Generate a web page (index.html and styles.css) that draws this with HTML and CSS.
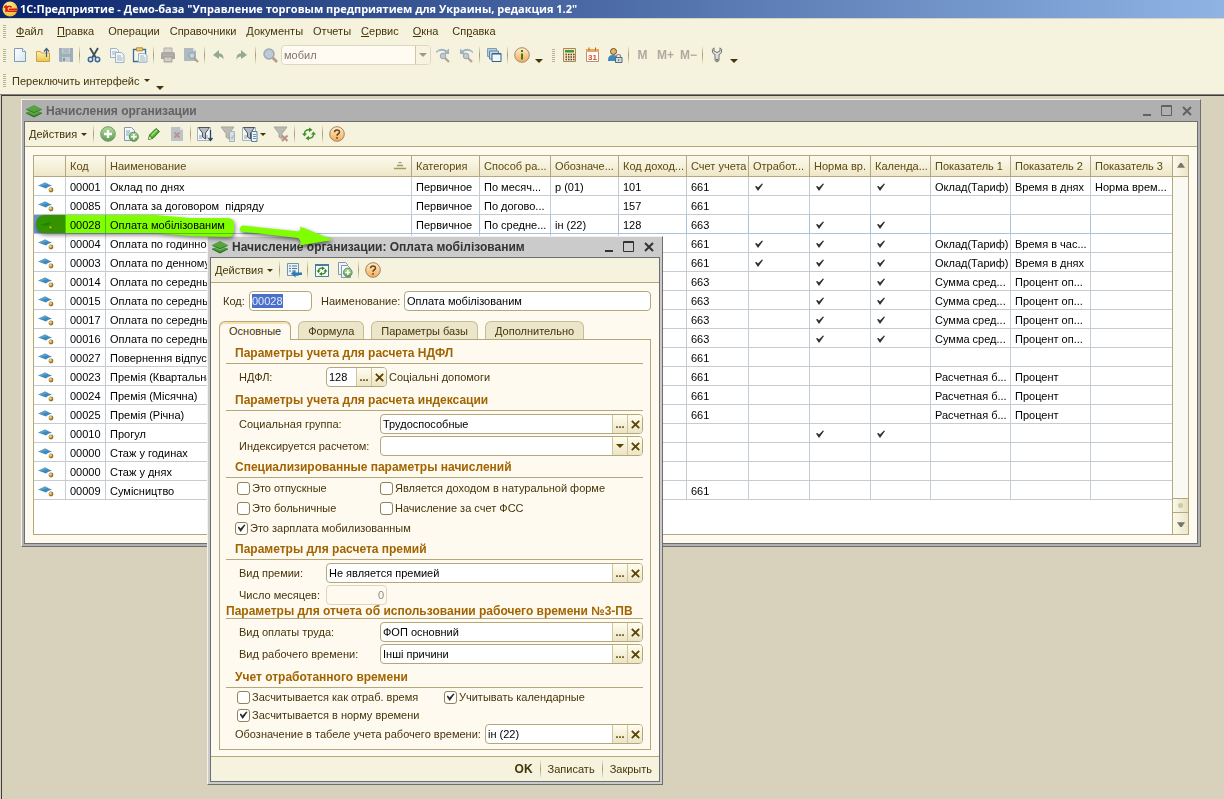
FILE: index.html
```html
<!DOCTYPE html>
<html lang="ru">

<head>
    <meta charset="UTF-8" />
    <meta name="viewport" content="width=device-width, initial-scale=1.0" />
    <title>1С:Предприятие - Демо-база</title>
    <link rel="stylesheet" href="styles.css">
</head>

<body>
    <!-- Icons -->
    <svg class="sprite" aria-hidden="true">
        <defs>
            <linearGradient id="g-orange" x1="0" y1="0" x2="0" y2="1">
                <stop offset="0" stop-color="#fff0cc" />
                <stop offset="1" stop-color="#f3ab58" />
            </linearGradient>
            <linearGradient id="g-green" x1="0" y1="0" x2="0" y2="1">
                <stop offset="0" stop-color="#b4dba0" />
                <stop offset="1" stop-color="#5b9d4c" />
            </linearGradient>
            <linearGradient id="g-folder" x1="0" y1="0" x2="0" y2="1">
                <stop offset="0" stop-color="#fdf3b0" />
                <stop offset="1" stop-color="#ecc24c" />
            </linearGradient>
            <linearGradient id="g-page" x1="0" y1="0" x2="1" y2="1">
                <stop offset="0" stop-color="#ffffff" />
                <stop offset="1" stop-color="#d5e6f3" />
            </linearGradient>
            <radialGradient id="g-ball" cx="0.4" cy="0.3" r="0.7">
                <stop offset="0" stop-color="#fff3a0" />
                <stop offset="1" stop-color="#f0b832" />
            </radialGradient>
        </defs>
        <symbol id="i-logo" viewBox="0 0 16 16">
            <circle cx="8" cy="8" r="7.500" fill="url(#g-ball)" />
            <path d="M2 6.500l2-1.500v6M9.500 6.500A2.500 2.500 0 1 0 8 10.200h7M9 8.200H6.800M9 8.300h6" fill="none" stroke="#d8160c" stroke-width="1.500" />
        </symbol>
        <symbol id="i-new" viewBox="0 0 16 16">
            <path d="M2.500 1.500h8l3 3v10h-11z" fill="url(#g-page)" stroke="#7e9cb8" />
            <path d="M10.500 1.500v3h3" fill="#fff" stroke="#7e9cb8" />
        </symbol>
        <symbol id="i-open" viewBox="0 0 16 16">
            <path d="M1.500 4.500h4l1 1.500h8v8.500h-13z" fill="url(#g-folder)" stroke="#d0a040" />
            <path d="M11.500 10V2M9 4.500L11.500 1.500 14 4.500" fill="none" stroke="#42607c" stroke-width="1.200" />
        </symbol>
        <symbol id="i-save" viewBox="0 0 16 16">
            <path d="M1 1h14v14H2l-1-1z" fill="#9fafb9" />
            <path d="M4 1.500h8v5H4z" fill="#c8d2d6" />
            <path d="M5 3h6M5 5h6" stroke="#93a4ae" />
            <path d="M4 10h8v5H4z" fill="#c3ccd0" />
            <path d="M5 11h2v3H5z" fill="#8497a4" />
        </symbol>
        <symbol id="i-cut" viewBox="0 0 16 16">
            <path d="M4 1l6 10M12 1L6 11" stroke="#3d4d5a" stroke-width="1.800" fill="none" />
            <circle cx="4.500" cy="12.500" r="2.200" fill="none" stroke="#37699c" stroke-width="1.500" />
            <circle cx="11.500" cy="12.500" r="2.200" fill="none" stroke="#37699c" stroke-width="1.500" />
        </symbol>
        <symbol id="i-copy" viewBox="0 0 16 16">
            <path d="M1.500 1.500h6l2 2v7h-8z" fill="#f2f6f8" stroke="#9db2c4" />
            <path d="M3 5h5M3 7h3" stroke="#9db2c4" />
            <path d="M6.500 5.500h6l2.500 2.500v7.500H6.500z" fill="#f2f6f8" stroke="#9db2c4" />
            <path d="M8 9h4M8 11h5.500M8 13h5.500" stroke="#9db2c4" />
        </symbol>
        <symbol id="i-paste" viewBox="0 0 16 16">
            <path d="M1.500 2.500h12v12h-12z" fill="#f8f6ea" stroke="#3d6d9a" stroke-width="1.300" />
            <path d="M4.500 .8h6v3h-6z" fill="#f0cf6c" stroke="#b58b30" />
            <path d="M6.500 6.500h6l2.500 2v6.500H6.500z" fill="#f4f8fb" stroke="#9db2c4" />
            <path d="M8 9h4M8 11h5.500M8 13h5.500" stroke="#9db2c4" />
        </symbol>
        <symbol id="i-print" viewBox="0 0 16 16">
            <path d="M4 1h8v5H4z" fill="#d8d3cc" stroke="#b3aea9" />
            <path d="M1 6.500Q1 5 3 5h10q2 0 2 1.500V12H1z" fill="#a9a7a6" />
            <path d="M3 8h10" stroke="#c9aaa4" stroke-width="1.500" />
            <path d="M4 10h8v5H4z" fill="#d0ccc6" stroke="#a5a2a0" />
        </symbol>
        <symbol id="i-preview" viewBox="0 0 16 16">
            <path d="M1 1h9l3 3v10H1z" fill="#aebac2" />
            <path d="M10 1v3h3" fill="#dbe1e4" />
            <circle cx="9" cy="8.500" r="3" fill="#c6d2da" stroke="#8f9ba5" />
            <path d="M11 11l4 4" stroke="#b09a90" stroke-width="2.200" />
        </symbol>
        <symbol id="i-undo" viewBox="0 0 16 16">
            <path d="M2 8l6-5v3.300q5 0 4.500 6.700-1-3.500-4.500-3.500V12z" fill="#93ab8e" />
        </symbol>
        <symbol id="i-redo" viewBox="0 0 16 16">
            <path d="M13 8L7 3v3.300Q2 6.300 2.500 13 3.500 9.500 7 9.500V12z" fill="#93ab8e" />
        </symbol>
        <symbol id="i-find" viewBox="0 0 16 16">
            <circle cx="7" cy="7" r="5" fill="#b9cada" stroke="#a3a9ae" stroke-width="1.500" />
            <path d="M10.500 10.500L15 15" stroke="#bd9c8c" stroke-width="2.800" />
        </symbol>
        <symbol id="i-findnext" viewBox="0 0 16 16">
            <path d="M1 6V4.500Q6-.5 12 3.500L14 1.500V7H8.500l2-2Q6 2 1 6z" fill="#9eb3c0" />
            <circle cx="8" cy="9" r="2.800" fill="#bccbd6" stroke="#9ba6ae" />
            <path d="M10 11l4 4" stroke="#b9a096" stroke-width="2.300" />
        </symbol>
        <symbol id="i-findprev" viewBox="0 0 16 16">
            <path d="M15 6V4.500Q10-.5 4 3.500L2 1.500V7h5.500l-2-2Q10 2 15 6z" fill="#9eb3c0" />
            <circle cx="8" cy="9" r="2.800" fill="#bccbd6" stroke="#9ba6ae" />
            <path d="M10 11l4 4" stroke="#b9a096" stroke-width="2.300" />
        </symbol>
        <symbol id="i-windows" viewBox="0 0 16 16">
            <path d="M1.500 1.500h9v8h-9z" fill="#b9cddd" stroke="#7f9db8" />
            <path d="M3.500 4h9v8h-9z" fill="#c9dae6" stroke="#5c83a8" />
            <path d="M6 6.500h9v8H6z" fill="#f2f7fa" stroke="#2e6190" />
            <path d="M6 7h9" stroke="#2e6190" />
        </symbol>
        <symbol id="i-info" viewBox="0 0 16 16">
            <circle cx="8" cy="8" r="7.300" fill="url(#g-orange)" stroke="#a58b68" />
            <path d="M8 6.500V12.500M8 3v2" fill="none" stroke="#3f7a26" stroke-width="2" />
        </symbol>
        <symbol id="i-calc" viewBox="0 0 16 16">
            <path d="M2.500 1.500h12v13h-12z" fill="#fbe6bf" stroke="#a8875d" />
            <path d="M4 3h9v2.500H4z" fill="#3c9b36" />
            <path d="M4.500 7.500h9M4.500 10h9M4.500 12.500h9" stroke="#54402c" stroke-width="1.500" stroke-dasharray="1.500 1" />
        </symbol>
        <symbol id="i-user" viewBox="0 0 16 16">
            <path d="M1 13q0-5 5-5t5 5v1H1z" fill="#3f88bd" />
            <circle cx="6.500" cy="4.500" r="3" fill="#e8b468" stroke="#6e4a20" />
            <path d="M9.500 11V9q0-1.500 2-1.500T13.500 9v2" fill="none" stroke="#7c8a94" stroke-width="1.200" />
            <path d="M8.500 10.500h6.500v5H8.500z" fill="#d5dbe0" stroke="#54697a" />
            <path d="M11.700 12v2" stroke="#54697a" />
        </symbol>
        <symbol id="i-wrench" viewBox="0 0 16 16">
            <path d="M5 .8Q2.500 2 3.500 5 4 7 6 7.500V13.500Q8 16.500 10 13.500V7.500Q12 7 12.500 5 13.500 2 11 .8V4L8 5.500 5 4z" fill="#dededc" stroke="#73726e" />
            <circle cx="8" cy="12.800" r="1" fill="#5e5d59" />
        </symbol>
        <symbol id="i-book" viewBox="0 0 16 16">
            <path d="M0 9.500l3-1L8 11l5-2.500 3 1L8 14z" fill="#4d9c38" />
            <path d="M0 9.500L8 13l8-3.500v1L8 14.500 0 10.500z" fill="#2f7023" />
            <path d="M0 6l8-4 8 4-8 4z" fill="#55a53e" />
            <path d="M0 6l8 3 8-3v.8L8 10.500 0 6.800z" fill="#367c27" />
        </symbol>
        <symbol id="i-add" viewBox="0 0 16 16">
            <circle cx="8" cy="8" r="7.300" fill="url(#g-green)" stroke="#75976b" />
            <path d="M8 4v8M4 8h8" stroke="#fff" stroke-width="2.400" />
        </symbol>
        <symbol id="i-addcopy" viewBox="0 0 16 16">
            <path d="M1.500 1.500h7l3 3v10h-10z" fill="url(#g-page)" stroke="#8099ae" />
            <path d="M3 5h4M3 7h5M3 9h3" stroke="#86a3bb" />
            <circle cx="10.800" cy="10.800" r="4.500" fill="url(#g-green)" stroke="#5e8b52" />
            <path d="M10.800 8v5.600M8 10.800h5.600" stroke="#fff" stroke-width="1.500" />
        </symbol>
        <symbol id="i-copyadd" viewBox="0 0 16 16">
            <path d="M1.500 .5h7l2 2v10h-9z" fill="#eef4f8" stroke="#8099ae" />
            <path d="M4.500 3.500h6l3 3v9h-9z" fill="url(#g-page)" stroke="#8099ae" />
            <circle cx="10.800" cy="10.500" r="4.300" fill="url(#g-green)" stroke="#5e8b52" />
            <path d="M10.800 8v5M8.300 10.500h5" stroke="#fff" stroke-width="1.500" />
        </symbol>
        <symbol id="i-edit" viewBox="0 0 16 16">
            <path d="M2.500 13.500l1-4.500L10 2.500 13.500 5.500 7 12.300z" fill="#55b02f" stroke="#2f7a1c" />
            <path d="M5.500 9.500l5.500-5.500" stroke="#aadf85" stroke-width="1.500" />
            <path d="M2.500 13.500l1-3 2 2z" fill="#f0e0a8" />
        </symbol>
        <symbol id="i-delete" viewBox="0 0 16 16">
            <path d="M2 1h9l3 3v11H2z" fill="#b9c3c9" />
            <path d="M11 1v3h3" fill="#dfe4e6" />
            <path d="M5.500 6.500l5 5M10.500 6.500l-5 5" stroke="#c09088" stroke-width="1.800" />
        </symbol>
        <symbol id="i-filter" viewBox="0 0 16 16">
            <path d="M.5 1.500h13v13H.5z" fill="#f4f6f8" stroke="#a5b1bb" />
            <path d="M2 10h3M9 10h2M2 12h3M9 12h2" stroke="#8fa0ae" />
            <path d="M1.500 1.500h11L8.500 7v6l-3-2V7z" fill="#b4bbc1" stroke="#4c5660" />
            <path d="M13.500 4v10M11.500 12l2 2.500 2-2.500" stroke="#28465f" stroke-width="1.300" fill="none" />
        </symbol>
        <symbol id="i-filtercell" viewBox="0 0 16 16">
            <path d="M1 1h13L9 7.500V13L6 11V7.500z" fill="#bbbab3" stroke="#a6a69f" />
            <path d="M9.500 5.500h5v10h-5z" fill="#d8dfe0" stroke="#a5b4bf" />
            <path d="M10.500 11l1.500 1.500L14 9" stroke="#9ba9b2" fill="none" />
        </symbol>
        <symbol id="i-filterlist" viewBox="0 0 16 16">
            <path d="M.5 1.500h13v13H.5z" fill="#f4f6f8" stroke="#a5b1bb" />
            <path d="M2 10h3M2 12h3" stroke="#8fa0ae" />
            <path d="M1.500 1.500h11L8.500 7v6l-3-2V7z" fill="#b4bbc1" stroke="#4c5660" />
            <path d="M9.500 5.500h5.500v10H9.500z" fill="#eef4f8" stroke="#58809f" />
            <path d="M11 8.500h3M11 10.500h3M11 12.500h3" stroke="#6e94b2" />
        </symbol>
        <symbol id="i-filteroff" viewBox="0 0 16 16">
            <path d="M1 1h13L9 7.500V13L6 11V7.500z" fill="#bbbab3" stroke="#a6a69f" />
            <path d="M9 9.500l5.500 5.500M14.500 9.500L9 15" stroke="#bb9186" stroke-width="2" />
        </symbol>
        <symbol id="i-refresh" viewBox="0 0 16 16">
            <path d="M3.500 8q0-4.500 5-4.200M12.500 8q0 4.500-5 4.200" fill="none" stroke="#3e8f2d" stroke-width="1.500" />
            <path d="M8 1.500l3.500 2.300L8 6.200zM8 9.800v4.700l-3.500-2.300z" fill="#3e8f2d" />
            <path d="M1 7.500h5l-2.500 3zM10 8.500h5l-2.500-3z" fill="#3e8f2d" />
        </symbol>
        <symbol id="i-reread" viewBox="0 0 16 16">
            <path d="M1.500 2.500h13v12h-13z" fill="#f6faf6" stroke="#4c7ba0" />
            <path d="M1 3h14" stroke="#4c7ba0" stroke-width="2" />
            <path d="M4.500 9q0-3 3.500-2.800M11.500 9q0 3-3.500 2.800" fill="none" stroke="#2f8324" stroke-width="1.300" />
            <path d="M8 4.500l3 1.800-3 1.900zM8 10v3.800l-3-1.900zM2.500 8.500h4l-2 2.500zM9.500 9.500h4l-2-2.500z" fill="#2f8324" />
        </symbol>
        <symbol id="i-savegoto" viewBox="0 0 16 16">
            <path d="M1.500 1.500h11v12h-11z" fill="#eaf2f8" stroke="#7392ab" />
            <path d="M3 4h2M6 4h5M3 6.500h2M6 6.500h5M3 9h2M6 9h3" stroke="#4b7ba5" stroke-width="1.200" />
            <path d="M5 11.500L9.500 8v2.500H16v2.500H9.500v2.500z" fill="#2f79b4" />
        </symbol>
        <symbol id="i-help" viewBox="0 0 16 16">
            <circle cx="8" cy="8" r="7.300" fill="url(#g-orange)" stroke="#a5805c" />
            <path d="M5.500 6.300Q5.600 4 8 4t2.500 2q0 1.200-1.400 2Q8 8.600 8 9.800M8 11v1.700" fill="none" stroke="#6a4420" stroke-width="1.500" />
        </symbol>
        <symbol id="i-row" viewBox="0 0 16 12">
            <path d="M0 4.500L3 3.500 7 1.500 11 3.500 14 4.500 10 6 8 7.500 4 6z" fill="#3f88bb" />
            <path d="M0 4.500L3 3.500 7 1.500 10 3 4 5z" fill="#5b9fcc" />
            <circle cx="13" cy="9" r="2.400" fill="#9c7628" />
            <circle cx="12.500" cy="8.400" r="1.300" fill="#ecd07c" />
        </symbol>
        <symbol id="i-tick" viewBox="0 0 8 8">
            <path d="M0 3.500L1.500 3 3 4.500 7 .5 8 1 3 8z" fill="#2e2e2e" />
        </symbol>
        <symbol id="i-min" viewBox="0 0 12 12">
            <path d="M2 10h8" stroke="currentColor" stroke-width="2" />
        </symbol>
        <symbol id="i-max" viewBox="0 0 12 12">
            <path d="M.5 .5h10v10H.5zM0 1.500h11" fill="none" stroke="currentColor" />
        </symbol>
        <symbol id="i-close" viewBox="0 0 12 12">
            <path d="M2 2l8 8M10 2l-8 8" stroke="currentColor" stroke-width="2" />
        </symbol>
        <symbol id="i-down" viewBox="0 0 8 4">
            <path d="M0 0h8L4 4z" fill="currentColor" />
        </symbol>
        <symbol id="i-sort" viewBox="0 0 12 8">
            <path d="M4.500 .5h3M3 3.500h6M0 6.500h12" stroke="#a39a62" stroke-width="1.500" />
        </symbol>
    </svg>

    <header>
        <h1 class="app-title"><svg class="icon"><use href="#i-logo" /></svg>1С:Предприятие - Демо-база "Управление торговым предприятием для Украины, редакция 1.2"</h1>
        <nav class="menu">
            <span class="grip"></span>
            <a href="#"><u>Ф</u>айл</a>
            <a href="#"><u>П</u>равка</a>
            <a href="#">Операции</a>
            <a href="#">Справочники</a>
            <a href="#">Документы</a>
            <a href="#">Отчеты</a>
            <a href="#"><u>С</u>ервис</a>
            <a href="#"><u>О</u>кна</a>
            <a href="#">Сп<u>р</u>авка</a>
        </nav>
        <div class="toolbar main-tools">
            <span class="grip"></span>
            <button class="tool" aria-label="Новый"><svg class="icon"><use href="#i-new" /></svg></button>
            <button class="tool" aria-label="Открыть"><svg class="icon"><use href="#i-open" /></svg></button>
            <button class="tool" aria-label="Сохранить"><svg class="icon"><use href="#i-save" /></svg></button>
            <span class="sep"></span>
            <button class="tool" aria-label="Вырезать"><svg class="icon"><use href="#i-cut" /></svg></button>
            <button class="tool" aria-label="Копировать"><svg class="icon"><use href="#i-copy" /></svg></button>
            <button class="tool" aria-label="Вставить"><svg class="icon"><use href="#i-paste" /></svg></button>
            <span class="sep"></span>
            <button class="tool" aria-label="Печать"><svg class="icon"><use href="#i-print" /></svg></button>
            <button class="tool" aria-label="Просмотр"><svg class="icon"><use href="#i-preview" /></svg></button>
            <span class="sep"></span>
            <button class="tool" aria-label="Отменить"><svg class="icon"><use href="#i-undo" /></svg></button>
            <button class="tool" aria-label="Вернуть"><svg class="icon"><use href="#i-redo" /></svg></button>
            <span class="sep"></span>
            <button class="tool" aria-label="Найти"><svg class="icon"><use href="#i-find" /></svg></button>
            <div class="field search">
                <select aria-label="Поиск">
                    <option>мобил</option>
                </select>
                <span class="drop"><svg class="caret"><use href="#i-down" /></svg></span>
            </div>
            <button class="tool" aria-label="Найти далее"><svg class="icon"><use href="#i-findnext" /></svg></button>
            <button class="tool" aria-label="Найти назад"><svg class="icon"><use href="#i-findprev" /></svg></button>
            <span class="sep"></span>
            <button class="tool" aria-label="Окна"><svg class="icon"><use href="#i-windows" /></svg></button>
            <span class="sep"></span>
            <button class="tool" aria-label="Справка"><svg class="icon"><use href="#i-info" /></svg></button>
            <button class="more" aria-label="Еще"><svg class="caret"><use href="#i-down" /></svg></button>
            <span class="grip"></span>
            <button class="tool" aria-label="Калькулятор"><svg class="icon"><use href="#i-calc" /></svg></button>
            <button class="tool" aria-label="Календарь">
                <svg class="icon" viewBox="0 0 16 16">
                    <path d="M2.500 2.500h12v12h-12z" fill="#fff" stroke="#b49475" />
                    <path d="M2 2h13v3H2z" fill="#f0a455" />
                    <path d="M5 .5v3M11.500 .5v3" stroke="#8f6c4c" />
                    <text x="4" y="13" class="day">31</text>
                </svg>
            </button>
            <button class="tool" aria-label="Пользователи"><svg class="icon"><use href="#i-user" /></svg></button>
            <span class="sep"></span>
            <button class="tool memory">M</button>
            <button class="tool memory">M+</button>
            <button class="tool memory">M−</button>
            <span class="sep"></span>
            <button class="tool" aria-label="Настройка"><svg class="icon"><use href="#i-wrench" /></svg></button>
            <button class="more" aria-label="Еще"><svg class="caret"><use href="#i-down" /></svg></button>
        </div>
        <div class="toolbar switch">
            <span class="grip"></span>
            <button class="text-tool">Переключить интерфейс<svg class="caret small"><use href="#i-down" /></svg></button>
            <button class="more" aria-label="Еще"><svg class="caret"><use href="#i-down" /></svg></button>
        </div>
    </header>

    <main class="desktop">
        <section class="window list-window">
            <div class="title-bar">
                <svg class="icon"><use href="#i-book" /></svg>
                <h2>Начисления организации</h2>
                <button aria-label="Свернуть"><svg><use href="#i-min" /></svg></button>
                <button aria-label="Развернуть"><svg><use href="#i-max" /></svg></button>
                <button aria-label="Закрыть"><svg><use href="#i-close" /></svg></button>
            </div>
            <div class="window-body">
                <div class="toolbar">
                    <button class="text-tool">Действия<svg class="caret small"><use href="#i-down" /></svg></button>
                    <span class="sep"></span>
                    <button class="tool" aria-label="Добавить"><svg class="icon"><use href="#i-add" /></svg></button>
                    <button class="tool" aria-label="Скопировать"><svg class="icon"><use href="#i-addcopy" /></svg></button>
                    <button class="tool" aria-label="Изменить"><svg class="icon"><use href="#i-edit" /></svg></button>
                    <button class="tool" aria-label="Удалить"><svg class="icon"><use href="#i-delete" /></svg></button>
                    <span class="sep"></span>
                    <button class="tool" aria-label="Отбор"><svg class="icon"><use href="#i-filter" /></svg></button>
                    <button class="tool" aria-label="Отбор по значению"><svg class="icon"><use href="#i-filtercell" /></svg></button>
                    <button class="tool wide" aria-label="История отборов"><svg class="icon"><use href="#i-filterlist" /></svg><svg class="caret small"><use href="#i-down" /></svg></button>
                    <button class="tool" aria-label="Отключить отбор"><svg class="icon"><use href="#i-filteroff" /></svg></button>
                    <span class="sep"></span>
                    <button class="tool" aria-label="Обновить"><svg class="icon"><use href="#i-refresh" /></svg></button>
                    <span class="sep"></span>
                    <button class="tool" aria-label="Справка"><svg class="icon"><use href="#i-help" /></svg></button>
                </div>
                <div class="list">
                    <table>
                        <colgroup>
                            <col class="w32"><col class="w40"><col><col class="w68"><col class="w71"><col class="w68"><col class="w68">
                            <col class="w62"><col class="w61"><col class="w61"><col class="w60"><col class="w80"><col class="w80"><col class="w81">
                        </colgroup>
                        <thead>
                            <tr>
                                <th></th>
                                <th>Код</th>
                                <th><span class="sorted">Наименование<svg><use href="#i-sort" /></svg></span></th>
                                <th>Категория</th>
                                <th>Способ ра...</th>
                                <th>Обозначе...</th>
                                <th>Код доход...</th>
                                <th>Счет учета</th>
                                <th>Отработ...</th>
                                <th>Норма вр.</th>
                                <th>Календа...</th>
                                <th>Показатель 1</th>
                                <th>Показатель 2</th>
                                <th>Показатель 3</th>
                            </tr>
                        </thead>
                        <tbody id="rows"></tbody>
                    </table>
                    <div class="scrollbar">
                        <button class="up" aria-label="Вверх"><svg class="caret"><use href="#i-down" /></svg></button>
                        <span class="thumb"></span>
                        <button class="down" aria-label="Вниз"><svg class="caret"><use href="#i-down" /></svg></button>
                    </div>
                </div>
            </div>
        </section>

        <section class="window dialog">
            <div class="title-bar">
                <svg class="icon"><use href="#i-book" /></svg>
                <h2>Начисление организации: Оплата мобілізованим</h2>
                <button aria-label="Свернуть"><svg><use href="#i-min" /></svg></button>
                <button aria-label="Развернуть"><svg><use href="#i-max" /></svg></button>
                <button aria-label="Закрыть"><svg><use href="#i-close" /></svg></button>
            </div>
            <div class="window-body">
                <div class="toolbar">
                    <button class="text-tool">Действия<svg class="caret small"><use href="#i-down" /></svg></button>
                    <span class="sep"></span>
                    <button class="tool" aria-label="Перейти к списку"><svg class="icon"><use href="#i-savegoto" /></svg></button>
                    <span class="sep"></span>
                    <button class="tool" aria-label="Перечитать"><svg class="icon"><use href="#i-reread" /></svg></button>
                    <button class="tool" aria-label="Скопировать"><svg class="icon"><use href="#i-copyadd" /></svg></button>
                    <span class="sep"></span>
                    <button class="tool" aria-label="Справка"><svg class="icon"><use href="#i-help" /></svg></button>
                </div>
                <form class="card">
                    <div class="top-fields">
                        <label for="code">Код:</label>
                        <div class="field code"><input id="code" type="text" value="00028"></div>
                        <label for="name" class="name-label">Наименование:</label>
                        <div class="field grow"><input id="name" type="text" value="Оплата мобілізованим"></div>
                    </div>
                    <div class="tabs" role="tablist">
                        <button type="button" role="tab" class="active" aria-selected="true">Основные</button>
                        <button type="button" role="tab">Формула</button>
                        <button type="button" role="tab">Параметры базы</button>
                        <button type="button" role="tab">Дополнительно</button>
                    </div>
                    <div class="panel">
                        <h3>Параметры учета для расчета НДФЛ</h3>
                        <div class="rows">
                            <div class="row narrow">
                                <label for="ndfl">НДФЛ:</label>
                                <div class="field short">
                                    <input id="ndfl" type="text" value="128">
                                    <button type="button">...</button>
                                    <button type="button" aria-label="Очистить"><svg><use href="#i-close" /></svg></button>
                                </div>
                                <span class="hint">Соціальні допомоги</span>
                            </div>
                        </div>
                        <h3>Параметры учета для расчета индексации</h3>
                        <div class="rows">
                            <div class="row">
                                <label for="group">Социальная группа:</label>
                                <div class="field grow">
                                    <input id="group" type="text" value="Трудоспособные">
                                    <button type="button">...</button>
                                    <button type="button" aria-label="Очистить"><svg><use href="#i-close" /></svg></button>
                                </div>
                            </div>
                            <div class="row">
                                <label for="indexed">Индексируется расчетом:</label>
                                <div class="field grow">
                                    <select id="indexed">
                                        <option></option>
                                    </select>
                                    <span class="drop"><svg class="caret"><use href="#i-down" /></svg></span>
                                    <button type="button" aria-label="Очистить"><svg><use href="#i-close" /></svg></button>
                                </div>
                            </div>
                        </div>
                        <h3 class="compact">Специализированные параметры начислений</h3>
                        <div class="checks">
                            <label><input type="checkbox">Это отпускные</label>
                            <label><input type="checkbox">Является доходом в натуральной форме</label>
                            <label><input type="checkbox">Это больничные</label>
                            <label><input type="checkbox">Начисление за счет ФСС</label>
                            <label class="outdent"><input type="checkbox" checked>Это зарплата мобилизованным</label>
                        </div>
                        <h3 class="compact">Параметры для расчета премий</h3>
                        <div class="rows">
                            <div class="row narrow">
                                <label for="bonus">Вид премии:</label>
                                <div class="field grow">
                                    <input id="bonus" type="text" value="Не является премией">
                                    <button type="button">...</button>
                                    <button type="button" aria-label="Очистить"><svg><use href="#i-close" /></svg></button>
                                </div>
                            </div>
                            <div class="row narrow">
                                <label for="months">Число месяцев:</label>
                                <div class="field short disabled"><input id="months" type="text" value="0" disabled></div>
                            </div>
                        </div>
                        <h3 class="tight">Параметры для отчета об использовании рабочего времени №3-ПВ</h3>
                        <div class="rows">
                            <div class="row">
                                <label for="pay">Вид оплаты труда:</label>
                                <div class="field grow">
                                    <input id="pay" type="text" value="ФОП основний">
                                    <button type="button">...</button>
                                    <button type="button" aria-label="Очистить"><svg><use href="#i-close" /></svg></button>
                                </div>
                            </div>
                            <div class="row">
                                <label for="time">Вид рабочего времени:</label>
                                <div class="field grow">
                                    <input id="time" type="text" value="Інші причини">
                                    <button type="button">...</button>
                                    <button type="button" aria-label="Очистить"><svg><use href="#i-close" /></svg></button>
                                </div>
                            </div>
                        </div>
                        <h3>Учет отработанного времени</h3>
                        <div class="checks time-checks">
                            <label><input type="checkbox">Засчитывается как отраб. время</label>
                            <label><input type="checkbox" checked>Учитывать календарные</label>
                            <label><input type="checkbox" checked>Засчитывается в норму времени</label>
                        </div>
                        <div class="row sheet">
                            <label for="mark">Обозначение в табеле учета рабочего времени:</label>
                            <div class="field grow">
                                <input id="mark" type="text" value="ін (22)">
                                <button type="button">...</button>
                                <button type="button" aria-label="Очистить"><svg><use href="#i-close" /></svg></button>
                            </div>
                        </div>
                    </div>
                </form>
                <footer class="actions">
                    <button class="ok">OK</button>
                    <span class="sep"></span>
                    <button>Записать</button>
                    <span class="sep"></span>
                    <button>Закрыть</button>
                </footer>
            </div>
        </section>

        <svg class="marker" viewBox="0 0 310 40" aria-hidden="true">
            <path d="M16 5H125L160 8H196Q204 8 204 13V20Q204 28 196 27L160 26 125 23H16Q6 23 6 14 6 5 16 5z" fill="#80ff00" />
        </svg>
        <svg class="arrow" viewBox="0 0 310 40" aria-hidden="true">
            <path d="M212 15.500L269 21.500Q271 20 270 16.500L303 30 269 35.500Q273 32 268 28L211 21.500Q208 19 212 15.500z" fill="#80ff00" />
        </svg>
    </main>

    <script>
        // код, наименование, категория, способ, обозначение, доход, счет, отработ., норма, календ., показатели
        const data = [
            ["00001", "Оклад по днях", "Первичное", "По месяч...", "р (01)", "101", "661", 1, 1, 1, "Оклад(Тариф)", "Время в днях", "Норма врем..."],
            ["00085", "Оплата за договором  підряду", "Первичное", "По догово...", "", "157", "661", 0, 0, 0, "", "", ""],
            ["00028", "Оплата мобілізованим", "Первичное", "По средне...", "ін (22)", "128", "663", 0, 1, 1, "", "", ""],
            ["00004", "Оплата по годинно", "", "", "", "", "661", 1, 1, 1, "Оклад(Тариф)", "Время в час...", ""],
            ["00003", "Оплата по денному", "", "", "", "", "661", 1, 1, 1, "Оклад(Тариф)", "Время в днях", ""],
            ["00014", "Оплата по середньо", "", "", "", "", "663", 0, 1, 1, "Сумма сред...", "Процент оп...", ""],
            ["00015", "Оплата по середньо", "", "", "", "", "663", 0, 1, 1, "Сумма сред...", "Процент оп...", ""],
            ["00017", "Оплата по середньо", "", "", "", "", "663", 0, 1, 1, "Сумма сред...", "Процент оп...", ""],
            ["00016", "Оплата по середньо", "", "", "", "", "663", 0, 1, 1, "Сумма сред...", "Процент оп...", ""],
            ["00027", "Повернення відпуск", "", "", "", "", "661", 0, 0, 0, "", "", ""],
            ["00023", "Премія (Квартальна", "", "", "", "", "661", 0, 0, 0, "Расчетная б...", "Процент", ""],
            ["00024", "Премія (Місячна)", "", "", "", "", "661", 0, 0, 0, "Расчетная б...", "Процент", ""],
            ["00025", "Премія (Річна)", "", "", "", "", "661", 0, 0, 0, "Расчетная б...", "Процент", ""],
            ["00010", "Прогул", "", "", "", "", "", 0, 1, 1, "", "", ""],
            ["00000", "Стаж у годинах", "", "", "", "", "", 0, 0, 0, "", "", ""],
            ["00000", "Стаж у днях", "", "", "", "", "", 0, 0, 0, "", "", ""],
            ["00009", "Сумісництво", "", "", "", "", "661", 0, 0, 0, "", "", ""]
        ];

        function renderCell(value) {
            if (value === 1) return '<td class="mark"><svg><use href="#i-tick" /></svg></td>';
            return `<td>${value || ""}</td>`;
        }

        document.getElementById("rows").innerHTML = data.map((row) => {
            const selected = row[0] === "00028" ? ' class="selected"' : "";
            return `<tr${selected}><td class="pic"><svg><use href="#i-row" /></svg></td>${row.map(renderCell).join("")}</tr>`;
        }).join("");

        document.getElementById("code").select();
    </script>
</body>

</html>
```
FILE: styles.css
```css
* {
    box-sizing: border-box;
}

body {
    margin: 0;
    min-height: 100vh;
    display: flex;
    flex-direction: column;
    font-family: "Liberation Sans", Arial, sans-serif;
    font-size: 11px;
    line-height: 14px;
    color: #46340a;
    background: #d8d2bd;
    overflow: hidden;
}

button,
input,
select {
    font: inherit;
    color: inherit;
    margin: 0;
    padding: 0;
    border: none;
    background: none;
}

svg {
    display: block;
    flex: none;
}

.sprite {
    position: absolute;
    width: 0;
    height: 0;
}

.icon {
    width: 16px;
    height: 16px;
}

.day {
    font-size: 8px;
    font-weight: bold;
    fill: #e04a20;
}

/* Main window */

header {
    background: #f5f2de;
    border-bottom: 1px solid #85817a;
}

.app-title {
    display: flex;
    align-items: center;
    gap: 2px;
    height: 19px;
    margin: 0;
    padding-left: 2px;
    font-family: "Open Sans", "DejaVu Sans", sans-serif;
    font-size: 11px;
    font-weight: bold;
    color: #fff;
    white-space: nowrap;
    background: linear-gradient(to right, #0a246a, #8fb4e4);
    border-bottom: 1px solid #d8d3c4;
}

.menu {
    display: flex;
    align-items: center;
    gap: 10px;
    height: 24px;
    padding-left: 3px;
}

.menu a {
    color: inherit;
    text-decoration: none;
}

.menu a:has(u) {
    padding-right: 4px;
}

.grip {
    width: 3px;
    height: 13px;
    margin-right: 2px;
    background: repeating-linear-gradient(to bottom, #b9b294 0 1px, transparent 1px 2px);
}

.menu .grip {
    margin-right: 0;
}

.toolbar {
    display: flex;
    align-items: center;
    height: 24px;
    background: #f5f2de;
}

.main-tools {
    padding-left: 3px;
}

.main-tools .more + .grip {
    margin-left: 7px;
}

.switch {
    height: 27px;
    padding-left: 3px;
}

.tool {
    display: flex;
    align-items: center;
    justify-content: center;
    flex: none;
    width: 23px;
    height: 22px;
}

.tool.wide {
    width: 30px;
    gap: 2px;
}

.memory {
    font-weight: bold;
    font-size: 12px;
    color: #b3a8a0;
}

.text-tool {
    display: flex;
    align-items: center;
    gap: 4px;
    padding: 0 4px;
    height: 22px;
    white-space: nowrap;
}

.sep {
    flex: none;
    width: 1px;
    height: 18px;
    margin: 0 2px;
    background: linear-gradient(to bottom, #f0ebd2, #a59b6d, #f0ebd2);
}

.caret {
    width: 8px;
    height: 4px;
}

.caret.small {
    width: 6px;
    height: 3px;
}

.more {
    align-self: flex-end;
    width: 12px;
    padding: 0 2px 4px;
}

/* Input fields */

.field {
    display: flex;
    height: 20px;
    background: #fff;
    border: 1px solid #b3a87c;
    border-radius: 4px;
    overflow: hidden;
    color: #000;
}

.field input,
.field select {
    flex: 1;
    min-width: 0;
    padding: 0 2px;
    appearance: none;
    outline: none;
}

.field button,
.field .drop {
    display: flex;
    align-items: center;
    justify-content: center;
    flex: none;
    width: 15px;
    border-left: 1px solid #cfc69f;
    background: linear-gradient(to bottom, #fffdf0, #ebe5c4);
    color: #5b4300;
    font-weight: bold;
}

.field button svg {
    width: 11px;
    height: 11px;
}

.field input::selection {
    background: #4c6fc9;
    color: #e5ebff;
}

.grow {
    flex: 1;
}

.short {
    width: 61px;
}

.disabled {
    background: #fffaf0;
    border-color: #ddd6bb;
    color: #8d8a80;
}

.disabled input {
    text-align: right;
    color: #8d8a80;
}

.search {
    width: 150px;
    background: #fffbf2;
    border-color: #ddd7bf;
    color: #7d7767;
}

.search .drop {
    background: #f7f3e0;
    color: #9d9985;
}

/* Child windows */

.desktop {
    flex: 1;
    position: relative;
    margin-left: 1px;
    border-top: 1px solid #403c3c;
    border-left: 1px solid #403c3c;
}

.window {
    position: absolute;
    padding: 0 2px 2px;
    background: #b0b0b0;
    border: 1px solid #6e6e6e;
    border-top-color: #f4f2ea;
    border-left-color: #f4f2ea;
}

.list-window {
    left: 19px;
    right: 23px;
    top: 3px;
}

.dialog {
    left: 205px;
    top: 140px;
    width: 456px;
    background: #cbcbcb;
}

.title-bar {
    display: flex;
    align-items: center;
    height: 21px;
    padding: 0 5px 0 2px;
    color: #626262;
}

.title-bar h2 {
    flex: 1;
    margin: 0 0 0 4px;
    font-size: 12px;
    font-weight: bold;
}

.title-bar button {
    width: 12px;
    height: 12px;
    margin-left: 8px;
}

.title-bar button svg {
    width: 12px;
    height: 12px;
}

.dialog .title-bar {
    height: 20px;
    color: #333;
}

.window-body {
    background: #fffaf0;
    border: 1px solid #6e6e6e;
}

.window-body .toolbar {
    height: 25px;
    border-bottom: 1px solid #b3a87c;
}

/* List of accruals */

.list {
    display: flex;
    align-items: stretch;
    height: 380px;
    margin: 8px;
    background: #fff;
    border: 1px solid #b3a87c;
}

table {
    flex: 1;
    align-self: flex-start;
    width: 100%;
    table-layout: fixed;
    border-collapse: separate;
    border-spacing: 0;
    color: #000;
}

.w32 { width: 32px; }
.w40 { width: 40px; }
.w60 { width: 60px; }
.w61 { width: 61px; }
.w62 { width: 62px; }
.w68 { width: 68px; }
.w71 { width: 71px; }
.w80 { width: 80px; }
.w81 { width: 81px; }

th,
td {
    padding: 0 0 0 4px;
    overflow: hidden;
    white-space: pre;
    text-align: left;
}

th {
    height: 21px;
    font-weight: normal;
    color: #5e4a10;
    background: linear-gradient(to bottom, #fcfaee, #eee7c8);
    border-right: 1px solid #b3a87c;
    border-bottom: 1px solid #b3a87c;
}

td {
    height: 19px;
    padding-top: 2px;
    border-right: 1px solid #c5cdd2;
    border-bottom: 1px solid #c5cdd2;
}

th:last-child,
td:last-child {
    border-right: none;
}

.sorted {
    display: flex;
    align-items: center;
    justify-content: space-between;
    padding-right: 5px;
}

.sorted svg {
    width: 12px;
    height: 8px;
}

.pic svg {
    width: 16px;
    height: 12px;
}

.mark {
    padding-left: 6px;
}

.mark svg {
    width: 8px;
    height: 8px;
}

.selected td {
    border-color: #a9c0e0;
}

.selected .pic {
    background: #6a93cb;
}

.scrollbar {
    display: flex;
    flex-direction: column;
    flex: none;
    width: 16px;
    background: #faf9f4;
    border-left: 1px solid #b3a87c;
}

.scrollbar button {
    display: flex;
    align-items: center;
    justify-content: center;
    height: 21px;
    background: linear-gradient(to right, #fbf9ec, #ece6c8);
    color: #77756c;
}

.scrollbar .caret {
    height: 7px;
}

/* taller arrows than in the drop-downs */
.scrollbar .caret use {
    transform: scaleY(1.500);
}

.up {
    border-bottom: 1px solid #b3a87c;
}

.up svg {
    transform: rotate(180deg);
}

.thumb {
    height: 15px;
    margin-top: auto;
    border: 1px solid #b3a87c;
    border-width: 1px 0;
    background: radial-gradient(circle, #cfc9a6 0 2px, transparent 3px), linear-gradient(to right, #fbf9ec, #e5dfbc);
}

/* Accrual card */

.card {
    padding: 8px 8px 6px;
}

.top-fields {
    display: flex;
    align-items: center;
}

.top-fields label {
    width: 30px;
    padding-left: 4px;
}

.top-fields .name-label {
    width: 92px;
    padding-left: 9px;
}

.code {
    width: 63px;
}

.tabs {
    display: flex;
    gap: 7px;
    margin-top: 10px;
}

.tabs button {
    height: 18px;
    padding: 0 9px;
    background: #ebe5c9;
    border: 1px solid #c6bd97;
    border-bottom: none;
    border-radius: 6px 6px 0 0;
    white-space: nowrap;
}

.tabs .active {
    height: 19px;
    margin-bottom: -1px;
    z-index: 1;
    background: #fffaf0;
    border-color: #b3a87c;
    box-shadow: inset 0 2px #f9dfae;
}

.panel {
    padding: 0 7px 5px 6px;
    border: 1px solid #b3a87c;
}

h3 {
    height: 24px;
    margin: 0;
    padding: 6px 0 0 9px;
    font-size: 12px;
    line-height: 14px;
    font-weight: bold;
    color: #a26400;
    border-bottom: 1px solid #b3a87c;
    white-space: nowrap;
}

h3.compact {
    height: 22px;
    padding-top: 4px;
}

h3.tight {
    height: 14px;
    padding: 0;
    line-height: 13px;
}

.rows {
    display: flex;
    flex-direction: column;
    gap: 2px;
    padding-top: 3px;
}

.row {
    display: flex;
    align-items: center;
}

.row label {
    width: 154px;
    padding-left: 13px;
    white-space: nowrap;
}

.narrow label {
    width: 100px;
}

.sheet label {
    width: 259px;
    padding-left: 9px;
}

.hint {
    margin-left: 2px;
}

.checks {
    display: grid;
    grid-template-columns: 143px 1fr;
    grid-auto-rows: 20px;
    padding-left: 11px;
}

.time-checks {
    grid-template-columns: 207px 1fr;
    grid-auto-rows: 18px;
}

.checks label {
    display: flex;
    align-items: center;
    gap: 2px;
    white-space: nowrap;
}

.checks .outdent {
    margin-left: -2px;
}

.checks input {
    appearance: none;
    display: grid;
    place-items: center;
    flex: none;
    width: 13px;
    height: 13px;
    background: #fff;
    border: 1px solid #8f8455;
    border-radius: 3px;
}

.checks input:checked::after {
    content: "";
    width: 8px;
    height: 8px;
    background: #2e2e2e;
    clip-path: polygon(0 40%, 18% 32%, 38% 55%, 85% 5%, 100% 12%, 40% 100%);
}

.actions {
    display: flex;
    align-items: center;
    justify-content: flex-end;
    height: 25px;
    padding-right: 2px;
    background: #f5f2de;
    border-top: 1px solid #b3a87c;
}

.actions button {
    height: 22px;
    padding: 0 5px;
}

.actions .ok {
    font-size: 12px;
    font-weight: bold;
}

/* Highlighter strokes over the selected row */

.marker,
.arrow {
    position: absolute;
    left: 28px;
    top: 114px;
    width: 310px;
    height: 40px;
    pointer-events: none;
}

.marker {
    mix-blend-mode: multiply;
    filter: drop-shadow(1px 2px 2px rgba(0, 0, 0, 0.5));
}

.arrow {
    filter: drop-shadow(1px 2px 2px rgba(0, 0, 0, 0.6));
}
```
